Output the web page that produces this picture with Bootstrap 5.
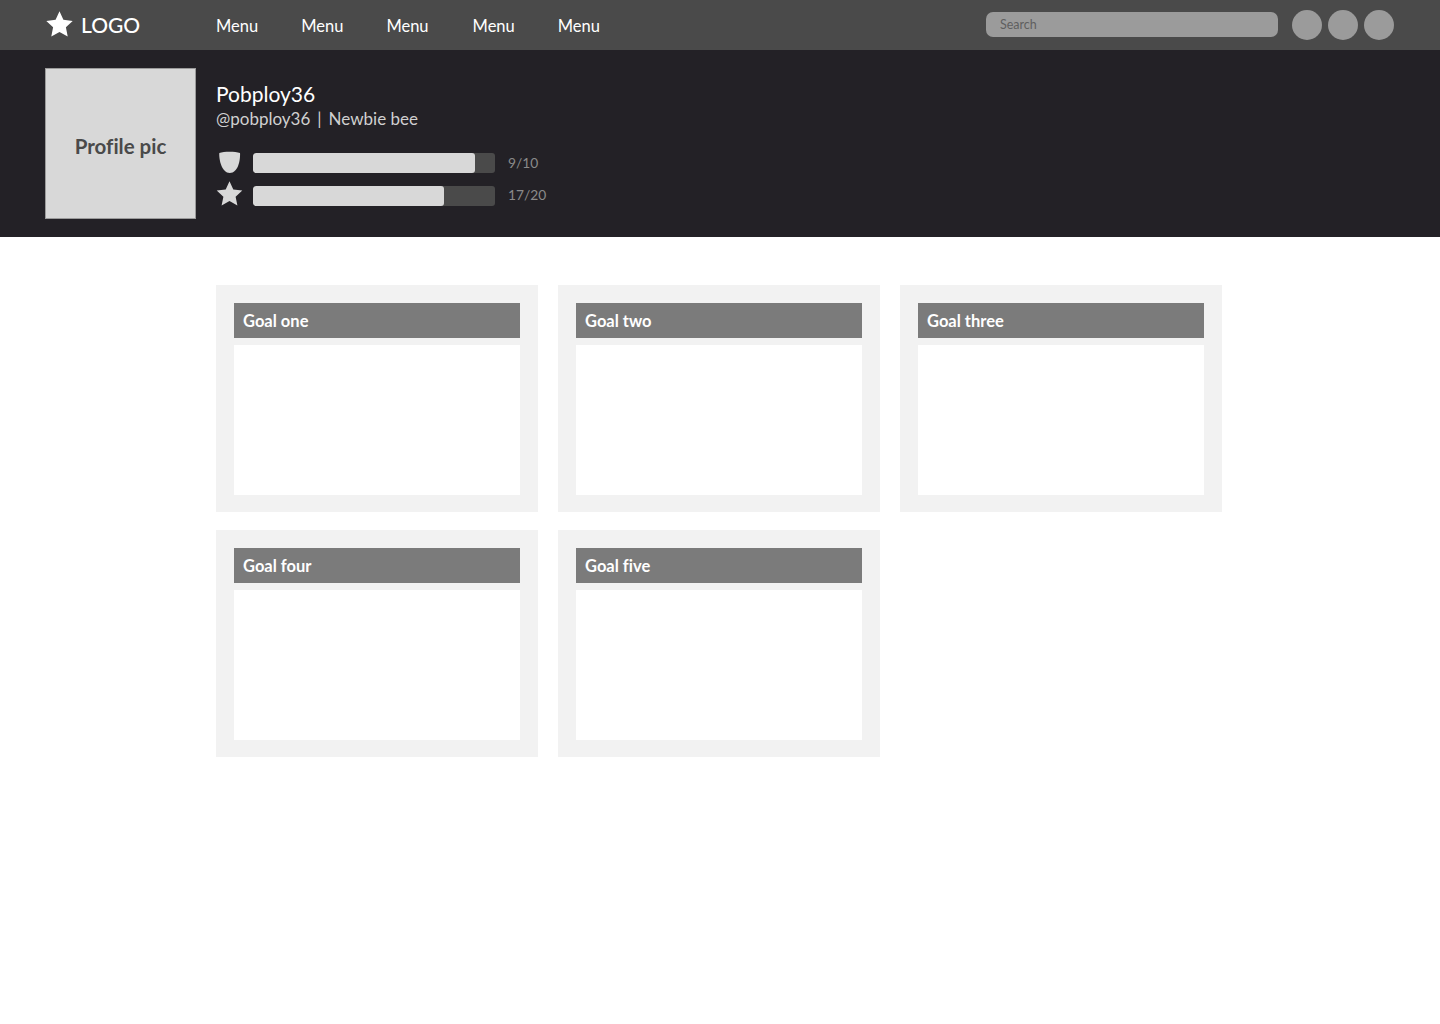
<!DOCTYPE html>
<html lang="en">
<head>
<meta charset="utf-8">
<title>Profile</title>
<link href="https://cdn.jsdelivr.net/npm/bootstrap@5.3.0/dist/css/bootstrap.min.css" rel="stylesheet">
<style>
body { font-family: Lato, "Open Sans", sans-serif; background: #fff; font-variant-ligatures: none; }
.topbar { height: 50px; background: #4a4a4a; padding: 0 46px 0 45px; }
.brand-star { width: 30px; height: 29px; fill: #fff; display: block; }
.brand-word { font-size: 21px; color: #fff; margin-left: 6px; margin-bottom: 2px; width: 135px; line-height: 1; font-weight: 500; }
.menu-link { font-size: 16.5px; color: #fff; text-decoration: none; line-height: 1; padding-top: 2px; }
.menu-link:nth-child(4) { margin-left: 1px; }
.menu-group { gap: 43px; }
.search-box { width: 292px; height: 25px; margin-bottom: 1px; background: #9b9b9b; border: 0; border-radius: 7px; padding: 0 14px; font-size: 12.5px; color: #4a4a4a; font-family: inherit; }
.search-box::placeholder { color: #5f5f5f; opacity: 1; }
.round-btn { width: 30px; height: 30px; background: #9b9b9b; border-radius: 50%; }
.round-group { gap: 6px; margin-left: 14px; }
.hero { height: 187px; background: #232126; padding: 18px 45px; }
.avatar { width: 151px; height: 151px; background: #d8d8d8; border: 1px solid #9b9b9b; font-size: 20.5px; font-weight: 700; color: #4a4a4a; margin-right: 20px; padding-top: 6px; }
.user-name { font-size: 21px; color: #fff; line-height: 26px; margin-top: 13px; }
.user-sub { font-size: 17px; color: #d0d0d0; line-height: 22px; margin-top: 1px; margin-bottom: 23px; }
.sub-sep { margin: 0 7px 0 7px; }
.stat-line { height: 20px; }
.stat-line + .stat-line { margin-top: 13px; }
.stat-icon { width: 28px; height: 24px; fill: #d8d8d8; margin-right: 9px; display: block; overflow: visible; }
.meter { width: 242px; height: 20px; background: #4a4a4a; border-radius: 3px; overflow: hidden; }
.meter-fill { height: 100%; background: #d8d8d8; border-radius: 3px; }
.stat-text { font-size: 13.8px; color: #8a8a8a; margin-left: 13px; line-height: 20px; }
.stat-line:first-of-type .stat-text { padding-top: 1px; }
.stat-line + .stat-line .stat-text { margin-bottom: 2px; }
.goal-grid { display: grid; grid-template-columns: repeat(3, 322px); column-gap: 20px; row-gap: 18px; padding: 48px 0 0 216px; }
.goal-tile { height: 227px; background: #f2f2f2; padding: 18px; }
.goal-head { height: 35px; background: #7b7b7b; color: #fff; font-size: 16.5px; font-weight: 700; padding: 2px 0 0 9px; }
.goal-body { height: 150px; background: #fff; margin-top: 7px; }
</style>
</head>
<body>
<nav class="topbar d-flex align-items-center">
  <svg class="brand-star" viewBox="0 0 30 29" aria-hidden="true"><path d="M14.5 .3L18.4 8.8 27.7 9.9 20.9 16.3 22.7 25.4 14.5 20.9 6.3 25.4 8.1 16.3 1.3 9.9 10.6 8.8z"/></svg>
  <span class="brand-word">LOGO</span>
  <div class="menu-group d-flex align-items-center">
    <a class="menu-link" href="#">Menu</a>
    <a class="menu-link" href="#">Menu</a>
    <a class="menu-link" href="#">Menu</a>
    <a class="menu-link" href="#">Menu</a>
    <a class="menu-link" href="#">Menu</a>
  </div>
  <div class="ms-auto d-flex align-items-center">
    <input class="search-box" type="text" placeholder="Search" aria-label="Search">
    <div class="round-group d-flex">
      <div class="round-btn"></div>
      <div class="round-btn"></div>
      <div class="round-btn"></div>
    </div>
  </div>
</nav>
<header class="hero d-flex">
  <div class="avatar d-flex align-items-center justify-content-center">Profile pic</div>
  <div>
    <div class="user-name">Pobploy36</div>
    <div class="user-sub">@pobploy36<span class="sub-sep">|</span>Newbie bee</div>
    <div class="stat-line d-flex align-items-center">
      <svg class="stat-icon" viewBox="0 0 28 24" aria-hidden="true"><path d="M3.3 2C8 .4 19 .4 24 2 24.5 9 22 22 13.7 22 6 22 2.8 9 3.3 2z"/></svg>
      <div class="meter"><div class="meter-fill" style="width:222px"></div></div>
      <span class="stat-text">9/10</span>
    </div>
    <div class="stat-line d-flex align-items-center">
      <svg class="stat-icon" viewBox="0 0 28 24" aria-hidden="true"><path d="M13.5 -2.8L17.3 5.5 26.3 6.5 19.6 12.7 21.4 21.6 13.5 17.1 5.6 21.6 7.4 12.7 .7 6.5 9.7 5.5z"/></svg>
      <div class="meter"><div class="meter-fill" style="width:191px"></div></div>
      <span class="stat-text">17/20</span>
    </div>
  </div>
</header>
<main class="goal-grid">
  <section class="goal-tile"><div class="goal-head d-flex align-items-center">Goal one</div><div class="goal-body"></div></section>
  <section class="goal-tile"><div class="goal-head d-flex align-items-center">Goal two</div><div class="goal-body"></div></section>
  <section class="goal-tile"><div class="goal-head d-flex align-items-center">Goal three</div><div class="goal-body"></div></section>
  <section class="goal-tile"><div class="goal-head d-flex align-items-center">Goal four</div><div class="goal-body"></div></section>
  <section class="goal-tile"><div class="goal-head d-flex align-items-center">Goal five</div><div class="goal-body"></div></section>
</main>
<script src="https://cdn.jsdelivr.net/npm/bootstrap@5.3.0/dist/js/bootstrap.bundle.min.js"></script>
</body>
</html>
